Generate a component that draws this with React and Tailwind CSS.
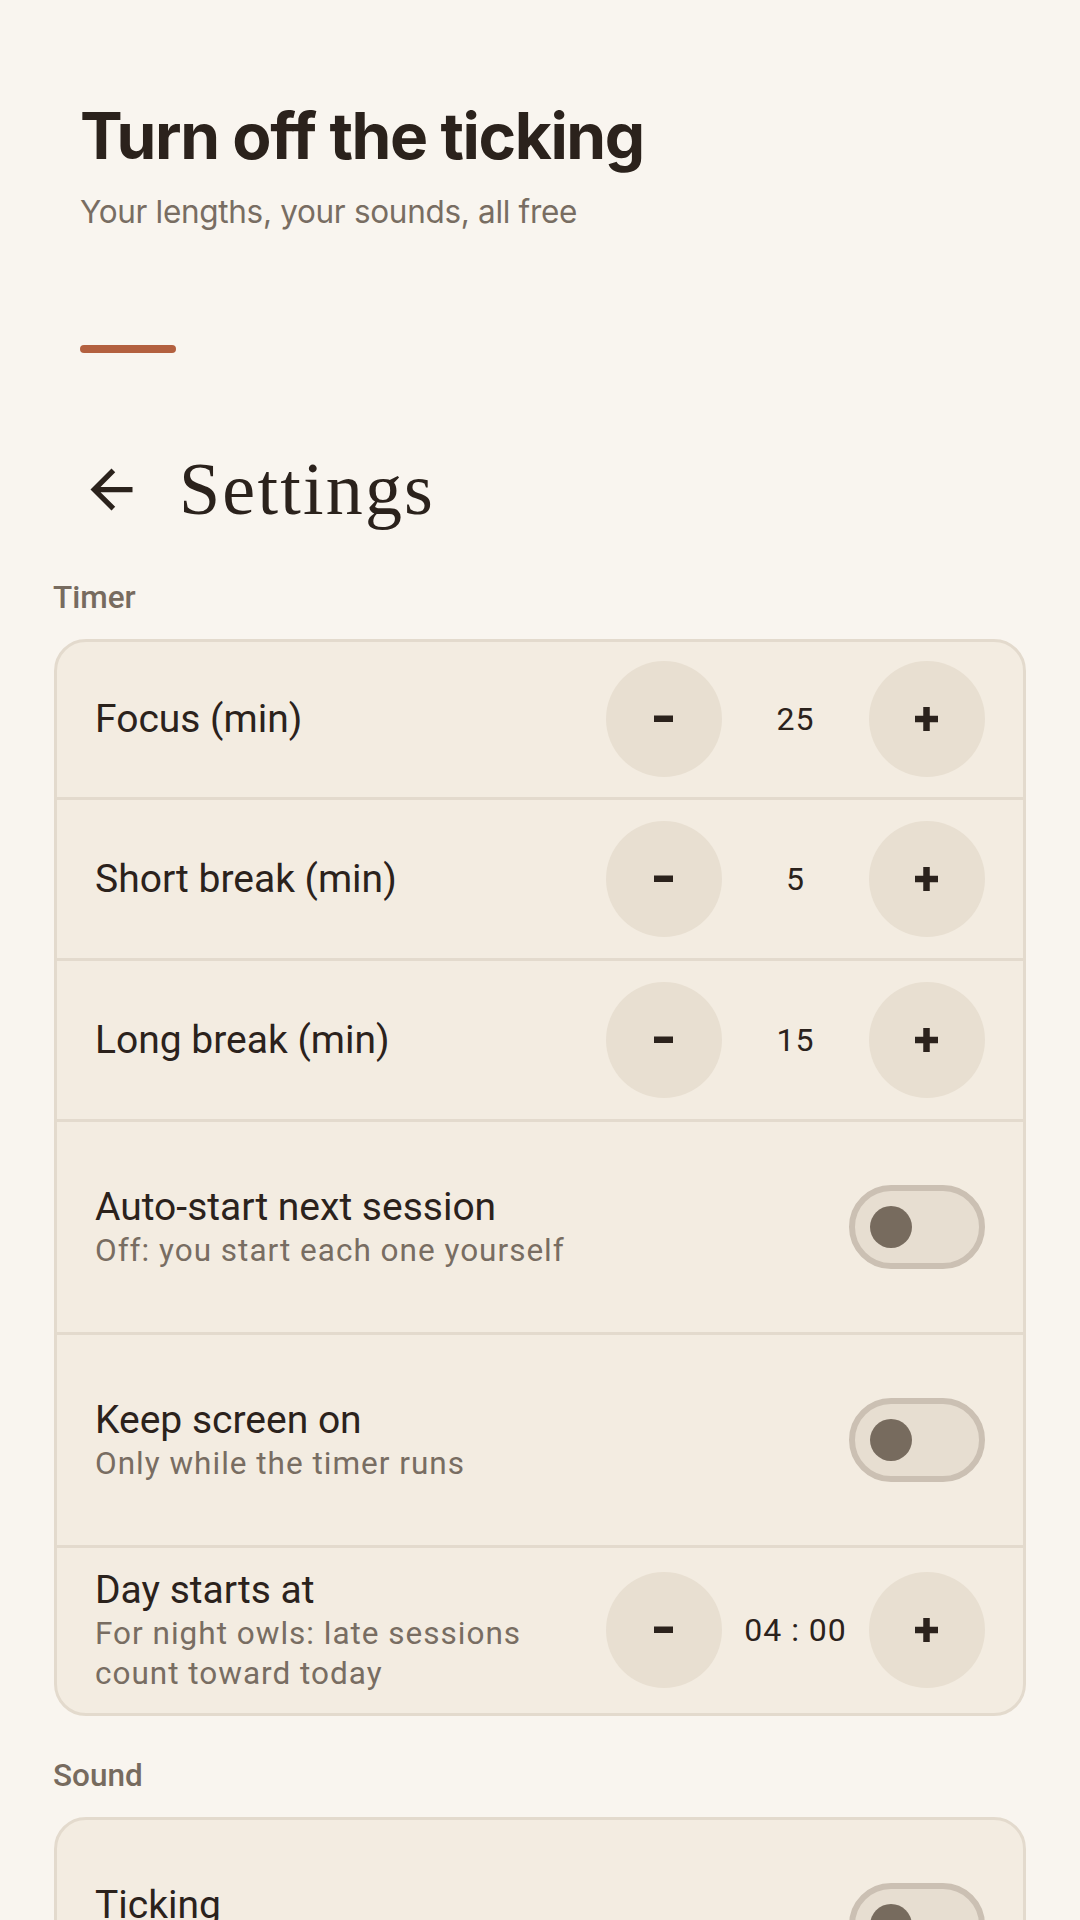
import React from "react";

const timerRows = [
  { type: "stepper", label: "Focus (min)", value: "25" },
  { type: "stepper", label: "Short break (min)", value: "5" },
  { type: "stepper", label: "Long break (min)", value: "15" },
  { type: "toggle", label: "Auto-start next session", hint: "Off: you start each one yourself" },
  { type: "toggle", label: "Keep screen on", hint: "Only while the timer runs" },
  {
    type: "stepper",
    label: "Day starts at",
    hint: "For night owls: late sessions count toward today",
    value: "04 : 00",
  },
];

const soundRows = [
  { type: "toggle", label: "Ticking", hint: "A soft tick while you focus" },
];

const RoundButton = ({ kind }) => (
  <button className="flex h-[116px] w-[116px] shrink-0 items-center justify-center rounded-full bg-[#e8dfd1]">
    {kind === "minus" ? (
      <svg width="20" height="8" viewBox="0 0 20 8">
        <rect x="0" y="0.5" width="19" height="6.5" fill="#2b221c" />
      </svg>
    ) : (
      <svg width="24" height="24" viewBox="0 0 24 24">
        <rect x="0" y="8.75" width="23" height="6.5" fill="#2b221c" />
        <rect x="8.25" y="0" width="6.5" height="24" fill="#2b221c" />
      </svg>
    )}
  </button>
);

const Toggle = () => (
  <div className="flex h-[84px] w-[136px] shrink-0 items-center rounded-full border-[6px] border-[#cbc0b3] bg-[#e7ded1] pl-[15px]">
    <div className="h-[42px] w-[42px] rounded-full bg-[#776b5e]" />
  </div>
);

const RowText = ({ label, hint }) => (
  <div className="min-w-0 flex-1">
    <p className="text-[39px] leading-[48px]">{label}</p>
    {hint && (
      <p className="text-[31.5px] leading-[40px] tracking-[1px] text-[#786d62]">{hint}</p>
    )}
  </div>
);

// heights include the 3px top divider, except on the first row of a card
const rowHeight = (row, first) => {
  if (row.type === "toggle") return first ? "h-[210px]" : "h-[213px] border-t-[3px]";
  if (row.hint) return first ? "h-[165px]" : "h-[168px] border-t-[3px]";
  return first ? "h-[155px]" : "h-[161px] border-t-[3px]";
};

const SettingRow = ({ row, first }) => (
  <div
    className={
      "flex items-center gap-[42px] border-[#e3dacd] px-[38px] " + rowHeight(row, first)
    }
  >
    <RowText label={row.label} hint={row.hint} />
    {row.type === "toggle" ? (
      <Toggle />
    ) : (
      <div className="flex items-center">
        <RoundButton kind="minus" />
        <span className="w-[147px] text-center text-[32px] tracking-[1px]">{row.value}</span>
        <RoundButton kind="plus" />
      </div>
    )}
  </div>
);

const Section = ({ title, rows, className }) => (
  <div className={className}>
    <p className="pl-[53px] text-[31.5px] font-medium leading-[40px] text-[#776b5f]">{title}</p>
    <div className="mx-[54px] mt-[21px] overflow-hidden rounded-[32px] border-[3px] border-[#e3dacd] bg-[#f3ece1]">
      {rows.map((row, i) => (
        <SettingRow key={row.label} row={row} first={i === 0} />
      ))}
    </div>
  </div>
);

export default function App() {
  return (
    <div className="min-h-screen bg-[#f9f5ef] font-['Roboto',sans-serif] text-[#2b221c]">
      {/* Header */}
      <div className="pl-[80px] pt-[98px] font-['Inter',sans-serif]">
        <h1 className="text-[64px] font-bold leading-[1.2] tracking-[-0.022em]">
          Turn off the ticking
        </h1>
        <p className="mt-[17px] text-[31.5px] leading-[40px] tracking-[-0.01em] text-[#786d62]">
          Your lengths, your sounds, all free
        </p>
        <div className="mt-[113px] h-[8px] w-[96px] rounded-full bg-[#b3603f]" />
      </div>

      {/* Top bar */}
      <div className="mt-[92px] flex items-center pl-[80px]">
        <svg width="63" height="63" viewBox="0 0 24 24">
          <path
            d="M20 11H7.83l5.59-5.59L12 4l-8 8 8 8 1.41-1.41L7.83 13H20v-2z"
            fill="#2b221c"
          />
        </svg>
        <h2 className="ml-[36px] font-['Liberation_Serif',serif] text-[74px] leading-[1.2] tracking-[2.2px]">
          Settings
        </h2>
      </div>

      <Section title="Timer" rows={timerRows} className="mt-[44px]" />
      <Section title="Sound" rows={soundRows} className="mt-[40px]" />
    </div>
  );
}
